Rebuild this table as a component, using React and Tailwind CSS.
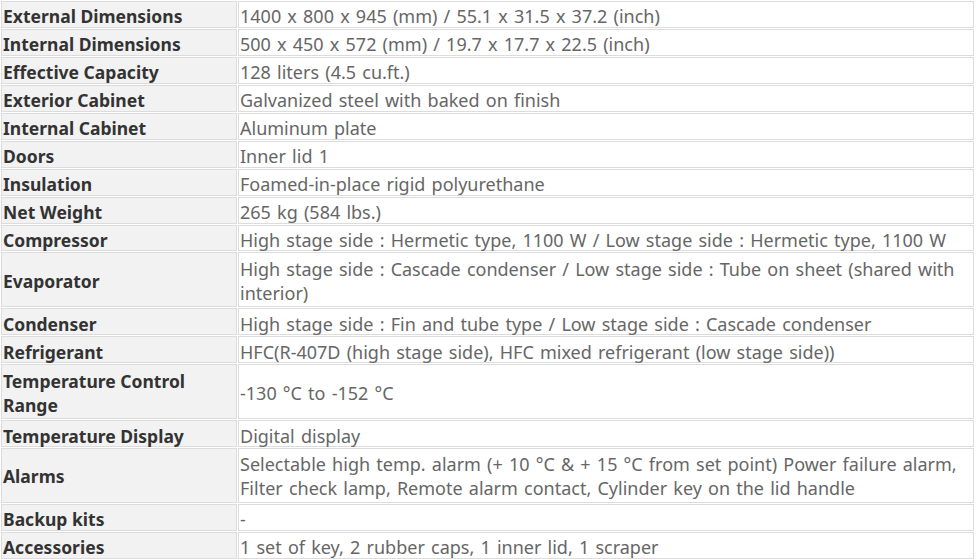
const specs = [
  ['External Dimensions', '1400 x 800 x 945 (mm) / 55.1 x 31.5 x 37.2 (inch)'],
  ['Internal Dimensions', '500 x 450 x 572 (mm) / 19.7 x 17.7 x 22.5 (inch)'],
  ['Effective Capacity', '128 liters (4.5 cu.ft.)'],
  ['Exterior Cabinet', 'Galvanized steel with baked on finish'],
  ['Internal Cabinet', 'Aluminum plate'],
  ['Doors', 'Inner lid 1'],
  ['Insulation', 'Foamed-in-place rigid polyurethane'],
  ['Net Weight', '265 kg (584 lbs.)'],
  ['Compressor', 'High stage side : Hermetic type, 1100 W / Low stage side : Hermetic type, 1100 W'],
  ['Evaporator', 'High stage side : Cascade condenser / Low stage side : Tube on sheet (shared with interior)', true],
  ['Condenser', 'High stage side : Fin and tube type / Low stage side : Cascade condenser'],
  ['Refrigerant', 'HFC(R-407D (high stage side), HFC mixed refrigerant (low stage side))'],
  ['Temperature Control Range', '-130 °C to -152 °C', true],
  ['Temperature Display', 'Digital display'],
  ['Alarms', 'Selectable high temp. alarm (+ 10 °C & + 15 °C from set point) Power failure alarm, Filter check lamp, Remote alarm contact, Cylinder key on the lid handle', true],
  ['Backup kits', '-'],
  ['Accessories', '1 set of key, 2 rubber caps, 1 inner lid, 1 scraper'],
]

export default function App() {
  return (
    <div className="w-[980px] h-[559px] bg-white overflow-hidden" style={{ fontFamily: '"Noto Sans", sans-serif' }}>
      <table className="w-[975px] table-fixed border-separate border-spacing-[1px]">
        <colgroup>
          <col className="w-[236px]" />
          <col />
        </colgroup>
        <tbody>
          {specs.map(([label, value, tall]) => {
            // single rows are tight, so the text is nudged down with padding
            const cell = tall ? 'h-[54.9px] leading-[24px] pt-[2px]' : 'h-[26.95px] leading-[20px] pt-[4px]'
            return (
              <tr key={label}>
                <td className={`${cell} border border-[#dcdcdc] bg-[#f2f2f2] pl-px pr-[2px] pb-0 align-middle text-[17.5px] font-bold text-[#333]`}>
                  {label}
                </td>
                <td className={`${cell} border border-[#dcdcdc] pl-px pr-[3px] pb-0 align-middle text-[18px] [word-spacing:1.5px] text-[#666]`}>
                  {value}
                </td>
              </tr>
            )
          })}
        </tbody>
      </table>
    </div>
  )
}
